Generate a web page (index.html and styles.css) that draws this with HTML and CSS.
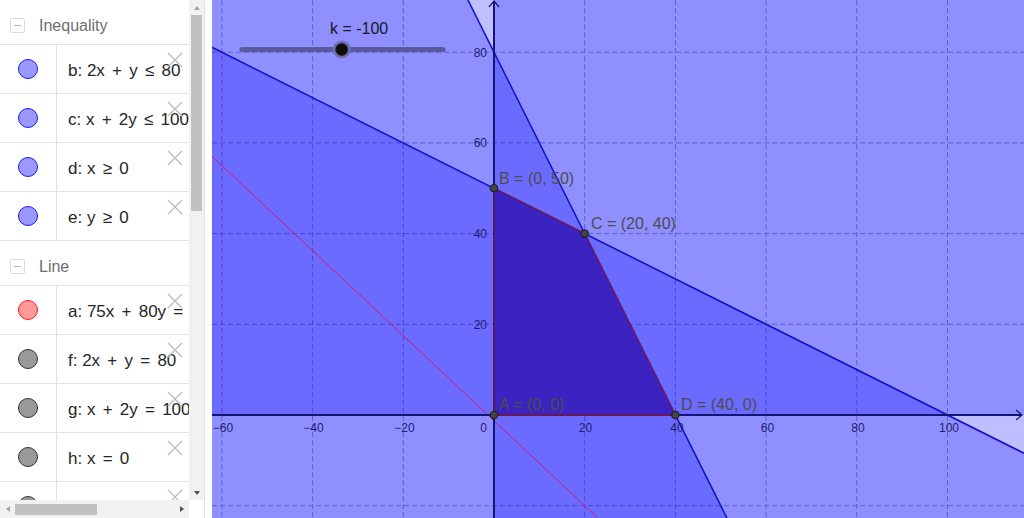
FILE: index.html
```
<!DOCTYPE html>
<html lang="en">
<head>
<meta charset="utf-8">
<title>Linear programming</title>
<link rel="stylesheet" href="styles.css">
</head>
<body>
<div class="app">
  <aside class="algebra">
    <div class="av-main">
      <div class="av-list">
        <section class="group">
          <div class="group-head"><span class="toggle"></span><span class="group-title">Inequality</span></div>
          <div class="group-items">
            <div class="item">
              <div class="marble-cell"><span class="marble m-blue"></span></div>
              <div class="formula">b: 2x <span class="op">+</span> y <span class="op">≤</span> 80</div>
              <svg class="close" viewBox="0 0 16 16"><path d="M1 1 L15 15 M15 1 L1 15"/></svg>
            </div>
            <div class="item">
              <div class="marble-cell"><span class="marble m-blue"></span></div>
              <div class="formula">c: x <span class="op">+</span> 2y <span class="op">≤</span> 100</div>
              <svg class="close" viewBox="0 0 16 16"><path d="M1 1 L15 15 M15 1 L1 15"/></svg>
            </div>
            <div class="item">
              <div class="marble-cell"><span class="marble m-blue"></span></div>
              <div class="formula">d: x <span class="op">≥</span> 0</div>
              <svg class="close" viewBox="0 0 16 16"><path d="M1 1 L15 15 M15 1 L1 15"/></svg>
            </div>
            <div class="item">
              <div class="marble-cell"><span class="marble m-blue"></span></div>
              <div class="formula">e: y <span class="op">≥</span> 0</div>
              <svg class="close" viewBox="0 0 16 16"><path d="M1 1 L15 15 M15 1 L1 15"/></svg>
            </div>
          </div>
        </section>
        <section class="group">
          <div class="group-head"><span class="toggle"></span><span class="group-title">Line</span></div>
          <div class="group-items">
            <div class="item">
              <div class="marble-cell"><span class="marble m-red"></span></div>
              <div class="formula">a: 75x <span class="op">+</span> 80y <span class="op">=</span> -100</div>
              <svg class="close" viewBox="0 0 16 16"><path d="M1 1 L15 15 M15 1 L1 15"/></svg>
            </div>
            <div class="item">
              <div class="marble-cell"><span class="marble m-gray"></span></div>
              <div class="formula">f: 2x <span class="op">+</span> y <span class="op">=</span> 80</div>
              <svg class="close" viewBox="0 0 16 16"><path d="M1 1 L15 15 M15 1 L1 15"/></svg>
            </div>
            <div class="item">
              <div class="marble-cell"><span class="marble m-gray"></span></div>
              <div class="formula">g: x <span class="op">+</span> 2y <span class="op">=</span> 100</div>
              <svg class="close" viewBox="0 0 16 16"><path d="M1 1 L15 15 M15 1 L1 15"/></svg>
            </div>
            <div class="item">
              <div class="marble-cell"><span class="marble m-gray"></span></div>
              <div class="formula">h: x <span class="op">=</span> 0</div>
              <svg class="close" viewBox="0 0 16 16"><path d="M1 1 L15 15 M15 1 L1 15"/></svg>
            </div>
            <div class="item">
              <div class="marble-cell"><span class="marble m-gray"></span></div>
              <div class="formula">i: y <span class="op">=</span> 0</div>
              <svg class="close" viewBox="0 0 16 16"><path d="M1 1 L15 15 M15 1 L1 15"/></svg>
            </div>
          </div>
        </section>
      </div>
      <div class="vscroll">
        <div class="sb-btn"><span class="tri-up"></span></div>
        <div class="vtrack"><div class="vthumb"></div></div>
        <div class="sb-btn"><span class="tri-down"></span></div>
      </div>
    </div>
    <div class="hscroll">
      <div class="htrack">
        <div class="sb-btn-h"><span class="tri-left"></span></div>
        <div class="hthumb"></div>
        <div class="hspace"></div>
        <div class="sb-btn-h"><span class="tri-right"></span></div>
      </div>
      <div class="corner"></div>
    </div>
  </aside>
  <div class="splitter"></div>
  <main class="graphics">
    <svg class="plot" width="812" height="518" viewBox="0 0 812 518">
      <rect x="0" y="0" width="812" height="518" fill="#ffffff"/>
      <g class="grid">
        <line x1="9.9" y1="0" x2="9.9" y2="518"/>
        <line x1="100.6" y1="0" x2="100.6" y2="518"/>
        <line x1="191.3" y1="0" x2="191.3" y2="518"/>
        <line x1="372.7" y1="0" x2="372.7" y2="518"/>
        <line x1="463.4" y1="0" x2="463.4" y2="518"/>
        <line x1="554.1" y1="0" x2="554.1" y2="518"/>
        <line x1="644.8" y1="0" x2="644.8" y2="518"/>
        <line x1="735.5" y1="0" x2="735.5" y2="518"/>
        <line x1="0" y1="52.2" x2="812" y2="52.2"/>
        <line x1="0" y1="142.9" x2="812" y2="142.9"/>
        <line x1="0" y1="233.6" x2="812" y2="233.6"/>
        <line x1="0" y1="324.3" x2="812" y2="324.3"/>
        <line x1="0" y1="505.7" x2="812" y2="505.7"/>
      </g>
      <g class="ineq">
        <rect x="282" y="0" width="530" height="518"/>
        <rect x="0" y="0" width="812" height="415"/>
        <polygon points="0,0 255.9,0 514.9,518 0,518"/>
        <polygon points="0,47.3 812,453.25 812,518 0,518"/>
      </g>
      <polygon class="feasible" points="282,415 282,188.25 372.7,233.6 463.4,415"/>
      <g class="bound">
        <line x1="255.9" y1="0" x2="514.9" y2="518"/>
        <line x1="0" y1="47.3" x2="812" y2="453.25"/>
      </g>
      <line class="objective" x1="0" y1="156.3" x2="385.8" y2="518"/>
      <g class="axes">
        <line x1="0" y1="415" x2="810" y2="415"/>
        <polyline points="804,410 810,415 804,420"/>
        <line x1="282" y1="518" x2="282" y2="1"/>
        <polyline points="277,7 282,1 287,7"/>
      </g>
      <polygon class="feasible-edge" points="282,415 282,188.25 372.7,233.6 463.4,415"/>
      <g class="axis-labels">
        <text x="11" y="431.5" text-anchor="middle">−60</text>
        <text x="101.5" y="431.5" text-anchor="middle">−40</text>
        <text x="192.5" y="431.5" text-anchor="middle">−20</text>
        <text x="275" y="431.5" text-anchor="end">0</text>
        <text x="373.5" y="431.5" text-anchor="middle">20</text>
        <text x="465" y="431.5" text-anchor="middle">40</text>
        <text x="555.5" y="431.5" text-anchor="middle">60</text>
        <text x="646" y="431.5" text-anchor="middle">80</text>
        <text x="737" y="431.5" text-anchor="middle">100</text>
        <text x="275" y="56.5" text-anchor="end">80</text>
        <text x="275" y="147.2" text-anchor="end">60</text>
        <text x="275" y="237.9" text-anchor="end">40</text>
        <text x="275" y="328.6" text-anchor="end">20</text>
      </g>
      <g class="points">
        <circle cx="282" cy="415" r="3.8"/>
        <circle cx="282" cy="188.25" r="3.8"/>
        <circle cx="372.7" cy="233.6" r="3.8"/>
        <circle cx="463.4" cy="415" r="3.8"/>
      </g>
      <g class="point-labels">
        <text x="287" y="410">A = (0, 0)</text>
        <text x="287" y="183.5">B = (0, 50)</text>
        <text x="379" y="228.5">C = (20, 40)</text>
        <text x="469" y="410">D = (40, 0)</text>
      </g>
      <g class="slider">
        <text class="slider-caption" x="118" y="34">k = -100</text>
        <line class="slider-line" x1="30" y1="49.5" x2="231" y2="49.5"/>
        <circle class="slider-halo" cx="129.7" cy="49.5" r="9"/>
        <circle class="slider-knob" cx="129.7" cy="49.5" r="6"/>
      </g>
    </svg>
  </main>
</div>
</body>
</html>
```
FILE: styles.css
```
* { box-sizing: border-box; }
html, body { margin: 0; padding: 0; }
body {
  width: 1024px;
  height: 518px;
  overflow: hidden;
  background: #ffffff;
  font-family: "Liberation Sans", Arial, sans-serif;
}
.app { display: flex; width: 1024px; height: 518px; }

/* ---------- algebra view ---------- */
.algebra {
  flex: none;
  width: 205px;
  height: 518px;
  border-right: 1px solid #e2e2e2;
  display: flex;
  flex-direction: column;
}
.av-main { display: flex; height: 500px; }
.av-list { width: 189px; height: 500px; overflow: hidden; }

.group-head {
  height: 44px;
  display: flex;
  align-items: center;
  padding: 7px 0 0 10px;
}
.toggle {
  width: 15px;
  height: 15px;
  border: 1px solid #dcdcdc;
  border-radius: 2px;
  display: flex;
  align-items: center;
  justify-content: center;
}
.toggle::after { content: ""; width: 7px; height: 1px; background: #b4b4b4; }
.group-title { margin-left: 14px; font-size: 16px; color: #6f6f6f; }

.group-items { border-top: 1px solid #e2e2e2; }
.item {
  position: relative;
  height: 49px;
  border-bottom: 1px solid #e2e2e2;
  display: flex;
  align-items: center;
}
.marble-cell {
  flex: none;
  width: 57px;
  height: 48px;
  border-right: 1px solid #e2e2e2;
  display: flex;
  align-items: center;
  justify-content: center;
}
.marble { width: 20px; height: 20px; border-radius: 50%; border: 1px solid; }
.m-blue { background: #9999ff; border-color: #1a1aff; }
.m-red { background: #ff9999; border-color: #ff1a1a; }
.m-gray { background: #999999; border-color: #333333; }
.formula {
  padding: 4px 0 0 11px;
  white-space: nowrap;
  font-size: 17px;
  color: #262626;
}
.op { margin: 0 2.5px; }
.close {
  position: absolute;
  left: 167px;
  top: 7px;
  width: 16px;
  height: 16px;
  fill: none;
  stroke: #bdbdbd;
  stroke-width: 1.4;
}

.vscroll {
  width: 15px;
  height: 500px;
  background: #f1f1f1;
  display: flex;
  flex-direction: column;
}
.sb-btn { flex: none; height: 15px; display: flex; align-items: center; justify-content: center; }
.vtrack { flex: 1; }
.vthumb { margin: 0 2px; height: 196px; background: #c1c1c1; }
.tri-up { width: 0; height: 0; border-left: 3.5px solid transparent; border-right: 3.5px solid transparent; border-bottom: 4px solid #a3a3a3; }
.tri-down { width: 0; height: 0; border-left: 3.5px solid transparent; border-right: 3.5px solid transparent; border-top: 4px solid #505050; }

.hscroll { height: 18px; display: flex; }
.htrack { width: 189px; background: #f1f1f1; display: flex; align-items: center; }
.sb-btn-h { flex: none; width: 15px; height: 18px; display: flex; align-items: center; justify-content: center; }
.hthumb { width: 82px; height: 11px; background: #c1c1c1; }
.hspace { flex: 1; }
.tri-left { width: 0; height: 0; border-top: 3.5px solid transparent; border-bottom: 3.5px solid transparent; border-right: 4px solid #a3a3a3; }
.tri-right { width: 0; height: 0; border-top: 3.5px solid transparent; border-bottom: 3.5px solid transparent; border-left: 4px solid #505050; }
.corner { width: 15px; background: #ffffff; }

.splitter { flex: none; width: 7px; background: #ffffff; }

/* ---------- graphics view ---------- */
.graphics { flex: none; width: 812px; height: 518px; overflow: hidden; }
.plot { display: block; font-family: "Liberation Sans", Arial, sans-serif; }
.grid line { stroke: #a8a8a8; stroke-width: 1; stroke-dasharray: 5 3; }
.ineq rect, .ineq polygon { fill: #0000ff; fill-opacity: 0.25; }
.feasible { fill: #3b23c2; }
.bound line { stroke: #1414c8; stroke-width: 1.6; }
.objective { stroke: #c81e78; stroke-width: 1; }
.axes line { stroke: #141478; stroke-width: 2; }
.axes polyline { fill: none; stroke: #141478; stroke-width: 1.2; }
.feasible-edge { fill: none; stroke: #7e1e46; stroke-width: 1.3; }
.axis-labels text { font-size: 12px; fill: #1e1e70; }
.points circle { fill: #454545; stroke: #1a1a1a; stroke-width: 1; }
.point-labels text { font-size: 16px; fill: #4d4d4d; }
.slider-caption { font-size: 16px; fill: #1a1a1a; }
.slider-line { stroke: #5a5a9c; stroke-width: 5; stroke-linecap: round; }
.slider-halo { fill: #6e6eb4; }
.slider-knob { fill: #0d0d0d; stroke: #2a2a2a; stroke-width: 1; }
```
